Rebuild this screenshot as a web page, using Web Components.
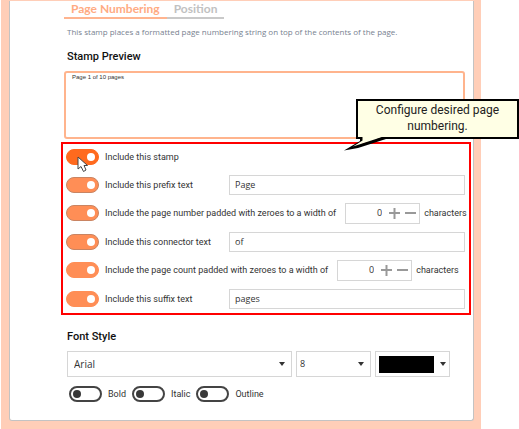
<!DOCTYPE html>
<html lang="en">
<head>
<meta charset="utf-8">
<title>Page Numbering</title>
<style>
html, body { margin: 0; min-height: 100%; background: #fff; }
body { font-family: Roboto, "Open Sans", sans-serif; font-size: 9px; color: #333; }
</style>
</head>
<body>
<stamp-page></stamp-page>
<script>
const define = (name, html, setup) => {
  const template = document.createElement('template');
  template.innerHTML = html;
  customElements.define(name, class extends HTMLElement {
    connectedCallback() {
      if (this.shadowRoot) return;
      const root = this.attachShadow({ mode: 'open' });
      root.append(template.content.cloneNode(true));
      if (setup) setup(this, root);
    }
  });
};

define('tab-bar', `
<style>
:host { display: flex; }
button { font: 700 12px/16px Lato, sans-serif; border: 0; border-bottom: 2px solid #c9c9c9; background: none; padding: 0 7px; color: #c1c1c1; height: 18px; white-space: nowrap; }
button.on { color: #ffab83; border-color: #ffb48f; }
</style>
<button class="on" type="button">Page Numbering</button><button type="button">Position</button>`);

define('toggle-switch', `
<style>
:host { display: inline-flex; }
label { display: flex; align-items: center; gap: 6px; white-space: nowrap; line-height: 14px; }
input { appearance: none; box-sizing: border-box; margin: 0; width: 33px; height: 16px; border-radius: 8px; border: 2px solid #444; background: #fff; display: flex; align-items: center; padding: 0 2px; flex: none; }
input::before { content: ""; width: 8px; height: 8px; border-radius: 50%; background: #383838; }
input:checked { background: #ff8e56; border: 1px solid #ff8e56; justify-content: flex-end; padding: 0 3px; }
input:checked::before { background: #fff; }
:host([outlined]) input:checked { border-color: #c98462; }
:host([hot]) input:checked { background: #ff6a1e; border-color: #ff6a1e; }
</style>
<label><input type="checkbox" role="switch"><span><slot></slot></span></label>`,
(host, root) => { root.querySelector('input').checked = host.hasAttribute('checked'); });

define('text-field', `
<style>
:host { display: block; }
input { box-sizing: border-box; width: 100%; height: 20px; border: 1px solid #d6d6d6; background: #fff; padding: 0 5px; font: 9px/14px "Open Sans", sans-serif; color: #333; display: block; border-radius: 0; }
</style>
<input type="text">`,
(host, root) => {
  const input = root.querySelector('input');
  input.value = host.getAttribute('value');
  input.setAttribute('aria-label', host.getAttribute('label'));
});

define('number-stepper', `
<style>
:host { display: inline-flex; box-sizing: border-box; width: 75px; height: 21px; border: 1px solid #d6d6d6; align-items: center; padding-right: 3px; gap: 5px; flex: none; }
input { flex: 1; min-width: 0; border: 0; padding: 0 2px 0 0; margin: 0; background: none; text-align: right; font: 9px/14px "Open Sans", sans-serif; color: #333; }
button { border: 0; background: none; padding: 0; width: 11px; height: 11px; display: flex; }
svg { width: 11px; height: 11px; stroke: #999; stroke-width: 2; }
</style>
<input type="text" inputmode="numeric" value="0">
<button type="button" aria-label="Increase"><svg viewBox="0 0 11 11"><path d="M0 5h11M5.500 0v11"/></svg></button>
<button type="button" aria-label="Decrease"><svg viewBox="0 0 11 11"><path d="M0 5h11"/></svg></button>`,
(host, root) => { root.querySelector('input').setAttribute('aria-label', host.getAttribute('label')); });

define('pick-list', `
<style>
:host { display: grid; align-items: center; height: 26px; box-sizing: border-box; border: 1px solid #d6d6d6; }
select { grid-area: 1 / 1; appearance: none; border: 0; background: none; height: 24px; width: 100%; margin: 0; padding: 0 20px 0 var(--inset, 6px); font: var(--size, 10px)/16px "Open Sans", sans-serif; color: #333; }
svg { grid-area: 1 / 1; justify-self: end; margin-right: 6px; width: 6px; height: 4px; pointer-events: none; }
</style>
<select></select><svg viewBox="0 0 6 4"><path d="M0 0h6L3 4z" fill="#333"/></svg>`,
(host, root) => {
  const select = root.querySelector('select');
  select.add(new Option(host.getAttribute('value')));
  select.setAttribute('aria-label', host.getAttribute('label'));
});

define('color-picker', `
<style>
:host { display: block; }
button { box-sizing: border-box; width: 100%; height: 26px; border: 1px solid #d6d6d6; background: #fff; padding: 0 3px; display: flex; align-items: center; gap: 6px; }
i { flex: 1; height: 17px; background: #000; }
svg { width: 6px; height: 4px; }
</style>
<button type="button" aria-label="Font colour"><i></i><svg viewBox="0 0 6 4"><path d="M0 0h6L3 4z" fill="#333"/></svg></button>`);

define('stamp-preview', `
<style>
:host { display: block; box-sizing: border-box; height: 68px; border: 2px solid #ffb48d; border-radius: 3px; padding: 0 6px; font: 6px/8px "Liberation Sans", sans-serif; color: #333; }
</style>
<slot></slot>`);

define('option-row', `
<style>
:host { display: flex; align-items: center; height: 29px; gap: 4px; white-space: nowrap; }
:host([kind="first"]) { height: 26px; }
:host([kind="number"]) { height: 28px; }
:host([kind="text"]) { display: grid; grid-template-columns: 163px 1fr; gap: 0; }
::slotted(number-stepper) { margin-left: 5px; }
</style>
<slot></slot>`);

define('option-group', `
<style>
:host { display: block; border: 2px solid #f00; padding: 0 4px 0 3px; }
</style>
<slot></slot>`);

define('callout-note', `
<style>
:host { display: block; box-sizing: border-box; background: #ffffe5; border: 2px solid #000; width: 163px; height: 40px; text-align: center; font: 12px/16px Roboto, sans-serif; color: #222; padding: 1px 10px; }
svg { position: absolute; left: -15px; top: 34px; width: 46px; height: 17px; overflow: visible; }
</style>
<slot></slot>
<svg viewBox="0 0 46 17"><path d="M19 0V5L10 12L40 2V0z" fill="#ffffe5"/><path d="M15 2H19.500V5.500L10 11.500L39 2H46V4H43L15 13L1 15.500L17 6V4H15z" fill="#000"/></svg>`);

define('mouse-pointer', `
<style>
:host { display: block; }
svg { display: block; width: 12px; height: 17px; }
</style>
<svg viewBox="0 0 12 17"><path d="M1 1V13L4 10.500L6.500 15.500L9 14L7 9.500H10.500Z" fill="#fff" stroke="#444"/></svg>`);

define('stamp-page', `
<style>
:host { display: block; position: relative; min-height: 100vh; }
.band { box-sizing: border-box; min-height: 100vh; margin: 0 38px 0 1px; padding: 1px 7px 8px 8px; background: #ffceb8; }
main { box-sizing: border-box; min-height: calc(100vh - 9px); border: 1px solid #c3c3c3; border-width: 0 1px 1px; border-radius: 0 0 3px 3px; background: #fff; padding: 0 2px 18px 51px; }
tab-bar { margin-left: 3px; }
p { margin: 6px 0 0 6px; font: 8px/14px "Open Sans", sans-serif; color: #77818f; }
h2 { margin: 9px 0 0 6px; font: 500 11px/18px Roboto, sans-serif; color: #111; }
stamp-preview { margin: 5px 6px 0 3px; }
option-group { margin-top: 3px; }
.later { margin-top: 13px; }
.font { display: grid; grid-template-columns: 3fr 1fr 1fr; gap: 4px; margin: 5px 21px 0 6px; }
.small { --size: 9px; --inset: 3px; }
.flags { display: flex; gap: 6px; margin: 9px 0 0 8px; }
callout-note { position: absolute; left: 356px; top: 99px; }
mouse-pointer { position: absolute; left: 77px; top: 156px; }
</style>
<div class="band"><main>
<tab-bar></tab-bar>
<p>This stamp places a formatted page numbering string on top of the contents of the page.</p>
<h2>Stamp Preview</h2>
<stamp-preview>Page 1 of 10 pages</stamp-preview>
<option-group>
<option-row kind="first"><toggle-switch checked hot>Include this stamp</toggle-switch></option-row>
<option-row kind="text"><toggle-switch checked outlined>Include this prefix text</toggle-switch><text-field value="Page" label="Prefix text"></text-field></option-row>
<option-row kind="number"><toggle-switch checked outlined>Include the page number padded with zeroes to a width of</toggle-switch><number-stepper label="Page number width"></number-stepper><span>characters</span></option-row>
<option-row kind="text"><toggle-switch checked outlined>Include this connector text</toggle-switch><text-field value="of" label="Connector text"></text-field></option-row>
<option-row kind="number"><toggle-switch checked>Include the page count padded with zeroes to a width of</toggle-switch><number-stepper label="Page count width"></number-stepper><span>characters</span></option-row>
<option-row kind="text"><toggle-switch checked>Include this suffix text</toggle-switch><text-field value="pages" label="Suffix text"></text-field></option-row>
</option-group>
<h2 class="later">Font Style</h2>
<div class="font"><pick-list value="Arial" label="Font"></pick-list><pick-list class="small" value="8" label="Font size"></pick-list><color-picker></color-picker></div>
<div class="flags"><toggle-switch>Bold</toggle-switch><toggle-switch>Italic</toggle-switch><toggle-switch>Outline</toggle-switch></div>
</main></div>
<callout-note>Configure desired page numbering.</callout-note>
<mouse-pointer></mouse-pointer>`);
</script>
</body>
</html>
